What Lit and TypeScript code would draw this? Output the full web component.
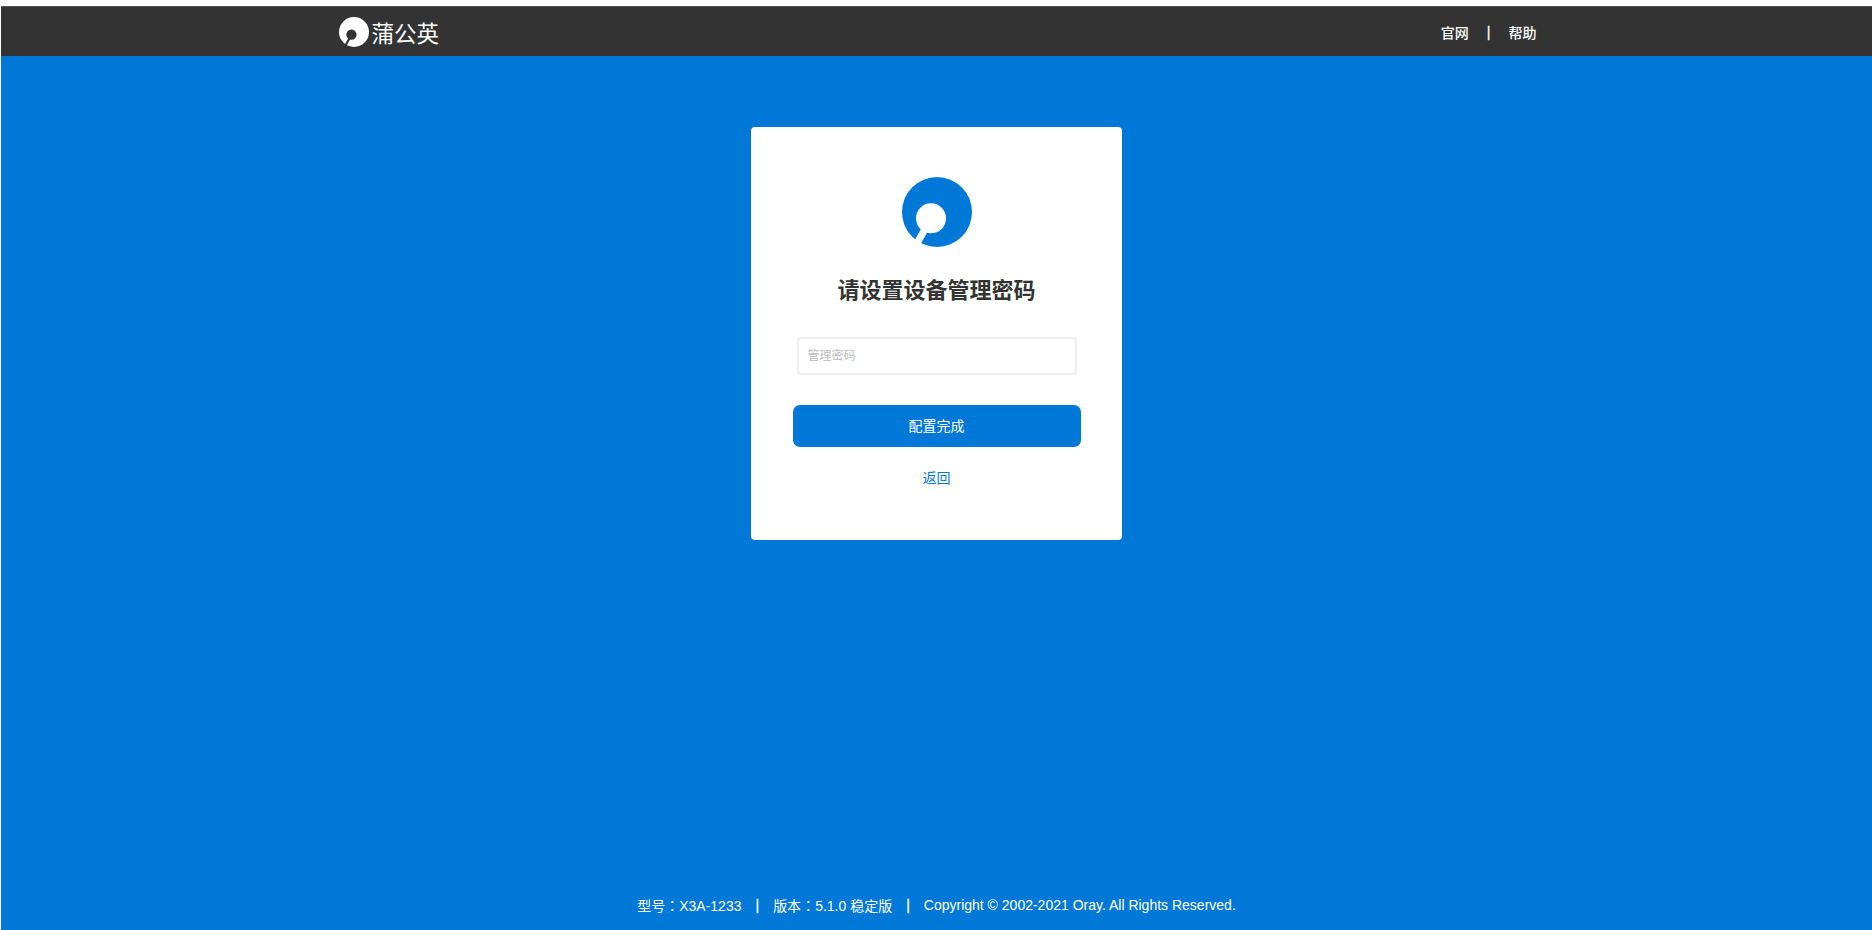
import { LitElement, html, css, svg } from "lit";
import { customElement } from "lit/decorators.js";

const logo = (cls: string) => html`<svg class=${cls} viewBox="0 0 70 70" aria-hidden="true">
  ${svg`<circle class="disc" cx="35" cy="35" r="35"></circle>
  <line class="cut" x1="29" y1="41.3" x2="12.5" y2="71"></line>
  <circle class="hole" cx="29" cy="41.3" r="15"></circle>`}
</svg>`;

@customElement("app-root")
export class AppRoot extends LitElement {
  static styles = css`
    :host {
      display: flex;
      flex-direction: column;
      height: 930px;
      background: #fff;
      overflow: hidden;
      font-family: "Liberation Sans", "Noto Sans CJK SC", sans-serif;
      font-size: 14px;
    }
    .page {
      flex: 1;
      margin: 6px 0 0 1px;
      display: flex;
      flex-direction: column;
      background: #0078d7;
      min-height: 0;
    }
    .header {
      height: 50px;
      box-sizing: border-box;
      border-top: 1px solid #555;
      background: #333;
      display: flex;
      justify-content: center;
      flex: none;
    }
    .header-inner {
      width: 1200px;
      display: flex;
      align-items: center;
      justify-content: space-between;
      color: #fff;
    }
    .brand {
      display: flex;
      align-items: center;
      gap: 3px;
      margin-left: 2px;
      font-family: "Noto Sans CJK SC", sans-serif;
      font-size: 22.5px;
      line-height: 30px;
      font-weight: 400;
    }
    .brand-logo { width: 30px; height: 30px; display: block; }
    .brand-logo .disc { fill: #fff; }
    .brand-logo .hole { fill: #333; r: 12px; }
    .brand-logo .cut { stroke: #333; stroke-width: 5; }
    .nav {
      display: flex;
      align-items: center;
      font-size: 14px;
      font-weight: 500;
      line-height: 20px;
      font-family: "Noto Sans CJK SC", sans-serif;
    }
    .nav .sep {
      margin: 0 18px;
      font-weight: 400;
      font-family: "Liberation Sans", sans-serif;
      -webkit-text-stroke: 0.3px #fff;
    }
    .main {
      flex: 1;
      display: flex;
      flex-direction: column;
      align-items: center;
      padding-top: 71px;
      min-height: 0;
    }
    .card {
      width: 371px;
      height: 413px;
      box-sizing: border-box;
      background: #fff;
      border-radius: 4px;
      display: flex;
      flex-direction: column;
      align-items: center;
      padding-top: 50px;
    }
    .card-logo { width: 70px; height: 70px; display: block; }
    .card-logo .disc { fill: #0078d7; }
    .card-logo .hole { fill: #fff; }
    .card-logo .cut { stroke: #fff; stroke-width: 7; }
    h1 {
      margin: 25px 0 0;
      font-family: "Noto Sans CJK SC", sans-serif;
      font-size: 22px;
      line-height: 32px;
      font-weight: 700;
      color: #333;
    }
    .field {
      margin-top: 33px;
      width: 280px;
      height: 38px;
      box-sizing: border-box;
      border: 2px solid #eee;
      border-radius: 4px;
      padding: 0 9px;
      font: 12px/34px "Liberation Sans", "Noto Sans CJK SC", sans-serif;
      color: #333;
      outline: none;
      background: #fff;
    }
    .field::placeholder { color: #bbb; opacity: 1; }
    .submit {
      margin-top: 30px;
      width: 288px;
      height: 42px;
      border: 0;
      border-radius: 7px;
      background: #0078d7;
      color: #fff;
      font: 14px "Liberation Sans", "Noto Sans CJK SC", sans-serif;
      padding: 0 0 2px;
    }
    .back {
      margin-top: 21px;
      color: #0078d7;
      text-decoration: none;
      line-height: 20px;
    }
    .footer {
      flex: none;
      height: 50px;
      display: flex;
      align-items: center;
      justify-content: center;
      color: #fff;
      font-size: 14px;
      white-space: pre;
    }
    .footer .sep { margin: 0 14px; -webkit-text-stroke: 0.3px #fff; }
    .colon { font-family: "Noto Sans CJK TC", sans-serif; }
  `;

  render() {
    return html`<div class="page">
      <header class="header">
        <div class="header-inner">
          <div class="brand">${logo("brand-logo")}<span>蒲公英</span></div>
          <nav class="nav"><span>官网</span><span class="sep">|</span><span>帮助</span></nav>
        </div>
      </header>
      <main class="main">
        <section class="card">
          ${logo("card-logo")}
          <h1>请设置设备管理密码</h1>
          <input class="field" type="password" placeholder="管理密码" />
          <button class="submit" type="button">配置完成</button>
          <a class="back" href="#">返回</a>
        </section>
      </main>
      <footer class="footer"><span>型号<span class="colon">：</span>X3A-1233</span><span class="sep">|</span><span>版本<span class="colon">：</span>5.1.0 稳定版</span><span class="sep">|</span><span>Copyright © 2002-2021 Oray. All Rights Reserved.</span></footer>
    </div>`;
  }
}
